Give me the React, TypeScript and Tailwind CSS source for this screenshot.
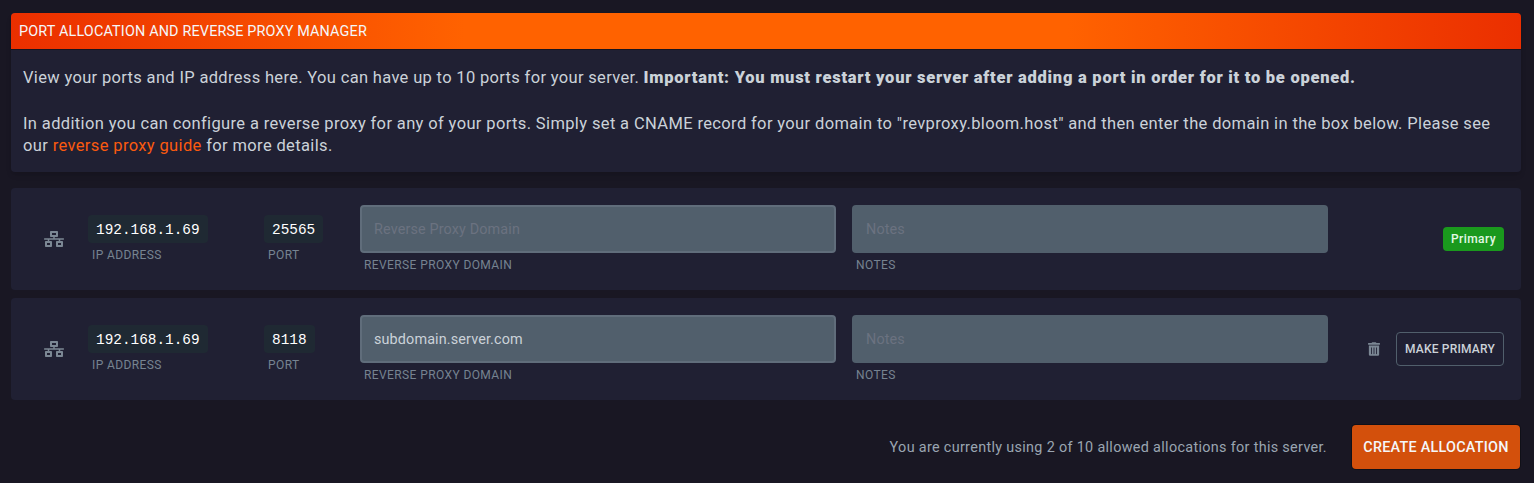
import { FaNetworkWired, FaTrashAlt } from "react-icons/fa";

type Allocation = { ip: string; port: string; domain: string; primary: boolean };

const allocations: Allocation[] = [
  { ip: "192.168.1.69", port: "25565", domain: "", primary: true },
  { ip: "192.168.1.69", port: "8118", domain: "subdomain.server.com", primary: false },
];

function Label({ children }: { children: string }) {
  return <p className="ml-1 w-max text-[12px] leading-4 tracking-[0.4px] text-[#768391]">{children}</p>;
}

function Code({ children }: { children: string }) {
  return (
    <code className="block h-7 w-max rounded bg-[#1f2933] px-2 font-['Liberation_Mono',monospace] text-[14.4px] leading-[30px] text-white">
      {children}
    </code>
  );
}

function Row({ allocation }: { allocation: Allocation }) {
  return (
    <div className="flex h-[102px] items-center rounded bg-[#202033] pr-[17px] pl-[33px]">
      <FaNetworkWired className="h-4 w-5 shrink-0 text-[#7b8794]" />
      <div className="ml-6 w-44 shrink-0">
        <Code>{allocation.ip}</Code>
        <div className="pt-1"><Label>IP ADDRESS</Label></div>
      </div>
      <div className="w-24 shrink-0">
        <Code>{allocation.port}</Code>
        <div className="pt-1"><Label>PORT</Label></div>
      </div>
      <div className="w-[476px] shrink-0">
        <input
          className="block h-12 w-full rounded border-2 border-[#606d7b] bg-[#515f6c] px-3 text-[14.4px] tracking-[0.13px] text-[#cbd2d9] outline-none placeholder:text-[#6b7280]"
          placeholder="Reverse Proxy Domain"
          defaultValue={allocation.domain}
        />
        <div className="pt-1"><Label>REVERSE PROXY DOMAIN</Label></div>
      </div>
      <div className="ml-4 w-[476px] shrink-0">
        <input
          className="block h-12 w-full rounded bg-[#515f6c] px-3.5 text-[14.4px] tracking-[0.13px] text-[#cbd2d9] outline-none placeholder:text-[#6b7280]"
          placeholder="Notes"
        />
        <div className="pt-1"><Label>NOTES</Label></div>
      </div>
      <div className="ml-auto flex items-center">
        {allocation.primary ? (
          <span className="flex h-6 w-[61px] items-center justify-center rounded bg-[#1a991d] text-[12px] font-medium tracking-[0.4px] text-[#e3f9e5]">
            <span>Primary</span>
          </span>
        ) : (
          <>
            <button className="mr-4 text-[#7b8794]">
              <FaTrashAlt className="h-3.5 w-3" />
            </button>
            <button className="flex h-[34px] w-[108px] items-center justify-center rounded border border-[#515f6c] text-[12px] font-medium tracking-[0.2px] text-[#cbd2d9]">
              <span>MAKE PRIMARY</span>
            </button>
          </>
        )}
      </div>
    </div>
  );
}

export default function App() {
  return (
    <main className="h-[483px] w-[1534px] bg-[#191723] pt-[13px] pr-[13px] pl-[11px] font-['Roboto',sans-serif]">
      <section className="h-[159px] overflow-hidden rounded bg-[#202033] shadow-md">
        <header className="flex h-[37px] items-center border-b border-[#17141f] bg-[linear-gradient(90deg,#eb2f00,#ff6200_30%,#ff6200_70%,#eb2f00)] bg-origin-border px-2 pt-0.5 text-[14.4px] tracking-[0.16px] text-[#f5f7fa]">
          <h1>PORT ALLOCATION AND REVERSE PROXY MANAGER</h1>
        </header>
        <div className="px-3 pt-[17px] text-[16.5px] leading-[22px] whitespace-nowrap text-[#cbd2d9]">
          <p className="tracking-[0.33px]">
            <span>View your ports and IP address here. You can have up to 10 ports for your server.</span>{" "}
            <strong className="font-black tracking-[0.74px]">Important: You must restart your server after adding a port in order for it to be opened.</strong>
          </p>
          <p className="mt-6 tracking-[0.365px]">
            <span>In addition you can configure a reverse proxy for any of your ports. Simply set a CNAME record for your domain to "revproxy.bloom.host" and then enter the domain in the box below. Please see</span>
            <br />
            our <a className="text-[#fa5a0f]">reverse proxy guide</a> for more details.
          </p>
        </div>
      </section>
      <div className="mt-4 flex flex-col gap-2">
        {allocations.map((allocation) => (
          <Row key={allocation.port} allocation={allocation} />
        ))}
      </div>
      <footer className="mt-[25px] flex items-center justify-end pr-px">
        <p className="mr-[25px] pt-0.5 text-[14.4px] tracking-[0.32px] text-[#9aa5b1]">You are currently using 2 of 10 allowed allocations for this server.</p>
        <button className="flex h-11 w-[168px] items-center justify-center rounded-sm bg-[#d3500c] pt-0.5 text-[14.4px] font-medium tracking-[0.24px] text-[#f5f7fa] shadow-[0_0_0_1px_#101018]">
          <span>CREATE ALLOCATION</span>
        </button>
      </footer>
    </main>
  );
}
